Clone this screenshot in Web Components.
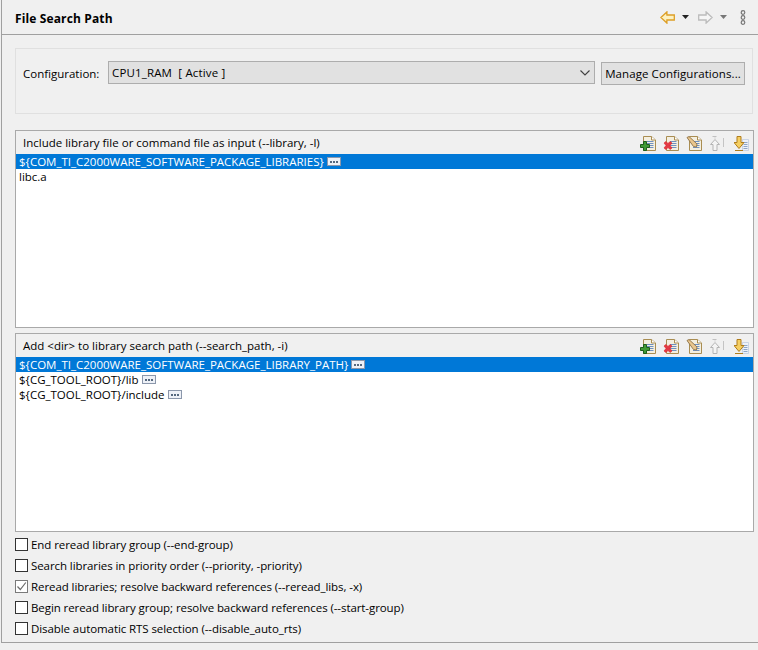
<!DOCTYPE html>
<html>
<head>
<meta charset="utf-8">
<title>File Search Path</title>
<style>
  html, body { margin: 0; padding: 0; background: #f0f0f0; }
  body { font: 11.5px "Open Sans", "Noto Sans", sans-serif; color: #000; width: 758px; height: 650px; overflow: hidden; }
</style>
</head>
<body>
<template id="doc-icons">
  <svg width="15" height="15" viewBox="0 0 15 15" style="display:block">
    <path d="M2.500 .5h8l4 3.500v10.500h-12z" fill="#f4efe0" stroke="#a98d52"/>
    <path d="M10.500 .5v3.500h4" fill="#fff" stroke="#a98d52"/>
    <path d="M6 5.500h6.500M6 7.500h6.500M6 9.500h6.500M6 11.500h6.500" stroke="#6f90c0"/>
  </svg>
</template>

<page-shell>
  <page-header title="File Search Path"></page-header>
  <config-bar label="Configuration:" value="CPU1_RAM  [ Active ]" action="Manage Configurations..."></config-bar>
  <path-table title="Include library file or command file as input (--library, -l)" style="height:198px;margin-top:16px">
    <path-row selected more>${COM_TI_C2000WARE_SOFTWARE_PACKAGE_LIBRARIES}</path-row>
    <path-row>libc.a</path-row>
  </path-table>
  <path-table title="Add &lt;dir&gt; to library search path (--search_path, -i)" style="height:199px;margin-top:5px">
    <path-row selected more>${COM_TI_C2000WARE_SOFTWARE_PACKAGE_LIBRARY_PATH}</path-row>
    <path-row more>${CG_TOOL_ROOT}/lib</path-row>
    <path-row more>${CG_TOOL_ROOT}/include</path-row>
  </path-table>
  <option-list>
    <opt-check>End reread library group (--end-group)</opt-check>
    <opt-check>Search libraries in priority order (--priority, -priority)</opt-check>
    <opt-check checked>Reread libraries; resolve backward references (--reread_libs, -x)</opt-check>
    <opt-check>Begin reread library group; resolve backward references (--start-group)</opt-check>
    <opt-check>Disable automatic RTS selection (--disable_auto_rts)</opt-check>
  </option-list>
</page-shell>

<script>
// small helper, every component sets its own shadow markup
function shadowOf(el, html) {
  const s = el.attachShadow({ mode: 'open' });
  s.innerHTML = html;
  return s;
}

const docIcon = document.getElementById('doc-icons').innerHTML;

const ICONS = {
  add: `<span class="ic">${docIcon}<svg class="ov" width="10" height="10" viewBox="0 0 10 10" style="left:-1px;top:5px"><path d="M3.500 .5h3v3h3v3h-3v3h-3v-3h-3v-3h3z" fill="#3f9a35" stroke="#1f5f1c"/></svg></span>`,
  del: `<span class="ic">${docIcon}<svg class="ov" width="10" height="10" viewBox="0 0 10 10" style="left:-1px;top:5px"><path d="M1 2l2-1.500 2 2 2-2 2 1.500-2 2.500 2 2.500-2 1.500-2-2-2 2-2-1.500 2-2.500z" fill="#e23a46" stroke="#d22" stroke-width=".6"/></svg></span>`,
  edit: `<span class="ic">${docIcon}<svg class="ov" width="12" height="12" viewBox="0 0 12 12" style="left:-1px;top:0"><path d="M1 1.500l2-1 8 7.500-.5 3-3-.5z" fill="#e9c68e" stroke="#8d7246" stroke-width=".9"/></svg></span>`,
  up: `<span class="ic" style="margin-left:8px"><svg width="14" height="15" viewBox="0 0 14 15" style="display:block"><path d="M5 3.500l4.500 5h-2.500v6h-4v-6h-2.500z" fill="#f4f4f4" stroke="#b4b4b4"/><path d="M2.500 .5h4M5 1.500v1" stroke="#c0c0c0"/><path d="M13.500 2v9" stroke="#c4c4c4"/></svg></span>`,
  down: `<span class="ic" style="margin-left:10px"><svg width="15" height="16" viewBox="0 0 15 16" style="display:block"><path d="M8.500 3.500h6v11h-6z" fill="#eef2f8" stroke="#c0cde0" stroke-width=".8"/><path d="M9.500 6.500h4M9.500 8.500h4M9.500 10.500h4M9.500 12.500h4" stroke="#8ea6c8"/><path d="M3 .5h4v6h3l-5 6-5-6h3z" fill="#f5cf62" stroke="#b07d1c"/><path d="M1 14.500h8" stroke="#b07d1c"/></svg></span>`
};

class PageShell extends HTMLElement {
  constructor() {
    super();
    shadowOf(this, `
      <style>
        :host { display: block; height: 642px; margin-left: 1px; border-left: 1px solid #a0a0a0; border-bottom: 1px solid #a0a0a0; background: #f0f0f0; }
      </style>
      <slot></slot>`);
  }
}

class PageHeader extends HTMLElement {
  connectedCallback() {
    shadowOf(this, `
      <style>
        :host { display: flex; align-items: center; height: 34px; border-bottom: 1px solid #a0a0a0; padding-left: 13px; box-sizing: content-box; }
        h1 { flex: 1; margin: 0; font-size: 12px; font-weight: 700; letter-spacing: .13px; position: relative; top: 1px; }
        .tools { display: flex; align-items: center; padding-right: 12px; }
        svg { display: block; }
      </style>
      <h1>${this.getAttribute('title')}</h1>
      <div class="tools">
        <svg width="15" height="13" viewBox="0 0 15 13" style="margin-right:7px"><path d="M.9 6.500l6-5.600v3.100h7.400v5h-7.400v3.100z" fill="#fdf1c0" stroke="#dd9f26" stroke-width="1.300"/></svg>
        <svg width="7" height="4" viewBox="0 0 7 4" style="margin-right:9px"><path d="M0 0h7l-3.500 4z" fill="#222"/></svg>
        <svg width="15" height="13" viewBox="0 0 15 13" style="margin-right:7px"><path d="M14.100 6.500l-6-5.600v3.100h-7.400v5h7.400v3.100z" fill="#f6f6f6" stroke="#bcbcbc" stroke-width="1.300"/></svg>
        <svg width="7" height="4" viewBox="0 0 7 4" style="margin-right:13px"><path d="M0 0h7l-3.500 4z" fill="#777"/></svg>
        <svg width="6" height="15" viewBox="0 0 6 15"><g fill="none" stroke="#777" stroke-width="1.200"><circle cx="3" cy="2.500" r="1.800"/><circle cx="3" cy="7.500" r="1.800"/><circle cx="3" cy="12.500" r="1.800"/></g></svg>
      </div>`);
  }
}

class ConfigBar extends HTMLElement {
  connectedCallback() {
    shadowOf(this, `
      <style>
        :host { display: flex; align-items: flex-start; box-sizing: border-box; height: 66px; margin: 13px 5px 0 13px; border: 1px solid #e0e0e0; padding: 12px 0 0 7px; }
        .lab { width: 85px; line-height: 23px; margin-top: 1px; }
        .combo { width: 487px; height: 23px; box-sizing: border-box; border: 1px solid #adadad; background: #e1e1e1; display: flex; align-items: center; justify-content: space-between; padding: 0 4px 0 3px; white-space: pre; margin-right: 6px; }
        .combo span { letter-spacing: .15px; }
        button { width: 144px; height: 23px; margin-top: 1px; padding: 0; font: inherit; letter-spacing: .08px; color: inherit; background: #e1e1e1; border: 1px solid #adadad; }
      </style>
      <span class="lab">${this.getAttribute('label')}</span>
      <div class="combo"><span>${this.getAttribute('value')}</span>
        <svg width="10" height="6" viewBox="0 0 10 6"><path d="M.5 .5l4.500 4.500 4.500-4.500" fill="none" stroke="#404040" stroke-width="1.100"/></svg>
      </div>
      <button>${this.getAttribute('action')}</button>`);
  }
}

class PathTable extends HTMLElement {
  connectedCallback() {
    const title = this.getAttribute('title').replace(/</g, '&lt;');
    shadowOf(this, `
      <style>
        :host { display: flex; flex-direction: column; box-sizing: border-box; margin-left: 13px; margin-right: 4px; border: 1px solid #a9a9a9; }
        .bar { display: flex; align-items: center; height: 23px; flex: none; padding: 0 4px 0 7px; box-sizing: border-box; }
        .bar span.t { flex: 1; }
        .tb { display: flex; align-items: center; position: relative; top: 1px; }
        .list { flex: 1; background: #fff; display: block; }
        .ic { position: relative; display: block; margin-left: 8px; }
        .ic:first-child { margin-left: 0; }
        .ov { position: absolute; }
      </style>
      <div class="bar"><span class="t">${title}</span>
        <div class="tb">${ICONS.add}${ICONS.del}${ICONS.edit}${ICONS.up}${ICONS.down}</div>
      </div>
      <div class="list"><slot></slot></div>`);
  }
}

class PathRow extends HTMLElement {
  connectedCallback() {
    const more = this.hasAttribute('more')
      ? `<svg class="more" width="14" height="9" viewBox="0 0 14 9"><rect x=".5" y=".5" width="13" height="8" fill="#eef1f7" stroke="#8b97ab"/><path d="M3 4h2v2H3zM6 4h2v2H6zM9 4h2v2H9z" fill="#56697f"/></svg>`
      : '';
    shadowOf(this, `
      <style>
        :host { display: flex; align-items: center; height: 15px; padding-left: 3px; white-space: pre; }
        :host([selected]) { background: #0078d7; color: #fff; }
        .more { margin-left: 3px; }
      </style>
      <slot></slot>${more}`);
  }
}

class OptionList extends HTMLElement {
  constructor() {
    super();
    shadowOf(this, `
      <style>
        :host { display: flex; flex-direction: column; margin: 2px 0 0 13px; letter-spacing: -.08px; }
      </style>
      <slot></slot>`);
  }
}

class OptCheck extends HTMLElement {
  connectedCallback() {
    const tick = this.hasAttribute('checked')
      ? `<svg width="11" height="11" viewBox="0 0 11 11"><path d="M1.500 5.500l2.800 3 5.500-7" fill="none" stroke="#6b6b6b" stroke-width="1.200"/></svg>`
      : '';
    shadowOf(this, `
      <style>
        :host { display: flex; align-items: center; height: 21px; }
        .box { width: 13px; height: 13px; box-sizing: border-box; border: 1px solid #333; background: #fff; margin-right: 3px; display: flex; align-items: center; justify-content: center; }
        :host([checked]) .box { border-color: #7a7a7a; }
      </style>
      <span class="box">${tick}</span><slot></slot>`);
  }
}

customElements.define('page-shell', PageShell);
customElements.define('page-header', PageHeader);
customElements.define('config-bar', ConfigBar);
customElements.define('path-table', PathTable);
customElements.define('path-row', PathRow);
customElements.define('option-list', OptionList);
customElements.define('opt-check', OptCheck);
</script>
</body>
</html>
